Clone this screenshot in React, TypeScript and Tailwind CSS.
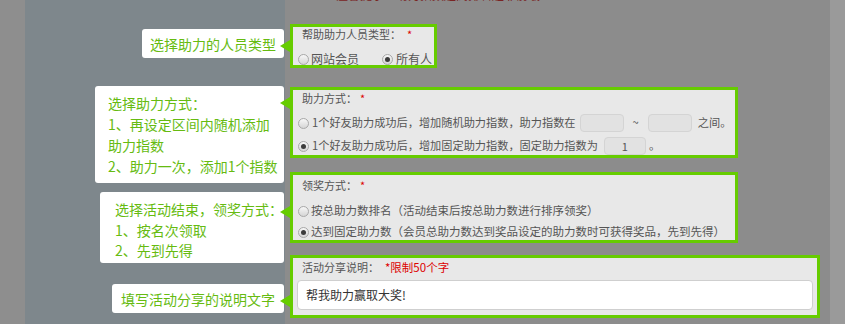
import React from 'react';

const FONT = { fontFamily: '"Noto Sans CJK SC", "Noto Sans", sans-serif' };

const Radio = ({ checked }: { checked?: boolean }) => (
	<span className="w-[11px] h-[11px] rounded-full border border-[#a8a8a8] bg-gradient-to-b from-[#f7f7f7] to-[#d6d6d6] flex items-center justify-center shrink-0">
		{checked && <span className="w-[5px] h-[5px] rounded-full bg-[#3c3c3c]" />}
	</span>
);

const Arrow = ({ top }: { top: string }) => (
	<span
		className={`absolute -left-[13px] w-0 h-0 border-y-[6px] border-y-transparent border-r-[10px] border-r-[#66cc00] ${top}`}
	/>
);

const Star = ({ ml = 'ml-[3px]' }: { ml?: string }) => <span className={`text-[#dd0000] ${ml}`}>*</span>;

const NumBox = ({ value, w }: { value?: string; w: string }) => (
	<span
		className={`inline-flex items-center justify-center h-[18px] rounded-[4px] border border-[#d4d4d4] bg-[#e2e2e2] text-[#555] text-[11px] shrink-0 ${w}`}
	>
		{value}
	</span>
);

const Tip = ({ className, lines }: { className: string; lines: string[] }) => (
	<div className={`bg-white rounded-[3px] text-[#66bb11] text-[14px] ${className}`}>
		{lines.map((l, i) => (
			<div key={i}>{l}</div>
		))}
	</div>
);

export default function App() {
	return (
		<div className="w-[845px] h-[324px] flex overflow-hidden" style={FONT}>
			<div className="w-[25px] bg-[#8e8e8e]" />
			<div className="w-[260px] bg-[#7e878c] flex flex-col items-end pr-[1px]">
				<Tip className="mt-[29px] w-[142px] h-[29px] flex items-center justify-center leading-none" lines={['选择助力的人员类型']} />
				<Tip
					className="mt-[28px] w-[189px] h-[97px] pl-[13px] pt-[7px] leading-[21px]"
					lines={['选择助力方式：', '1、再设定区间内随机添加', '助力指数', '2、助力一次，添加1个指数']}
				/>
				<Tip
					className="mt-[9px] w-[184px] h-[71px] pl-[15px] pt-[7px] leading-[20.5px]"
					lines={['选择活动结束，领奖方式：', '1、按名次领取', '2、先到先得']}
				/>
				<Tip className="mt-[21px] w-[172px] h-[29px] flex items-center justify-center leading-none" lines={['填写活动分享的说明文字']} />
			</div>
			<div className="w-[545px] bg-[#8c8c8c] flex flex-col pl-[5px]">
				<div className="h-[24px] overflow-hidden pl-[46px]">
					<div className="-mt-[12px] text-[12px] leading-[14px] text-[#7a2424]">温馨提示：助力指数越高排名越靠前哦</div>
				</div>

				<div className="relative w-[147px] h-[44px] border-[3px] border-[#66cc00] bg-[#e8e8e8] text-[#555]">
					<Arrow top="top-[13px]" />
					<div className="pl-[9px] h-[14px] leading-[14px] text-[11px]">
						帮助助力人员类型：
						<Star ml="ml-[6px]" />
					</div>
					<div className="mt-[12px] h-[12px] pl-[5px] flex items-center text-[12px] leading-none">
						<Radio />
						<span className="ml-[2px]">网站会员</span>
						<span className="ml-[23px]" />
						<Radio checked />
						<span className="ml-[3px]">所有人</span>
					</div>
				</div>

				<div className="relative mt-[19px] w-[448px] h-[71px] border-[3px] border-[#66cc00] bg-[#e8e8e8] text-[#555]">
					<Arrow top="top-[7px]" />
					<div className="pl-[9px] h-[17px] leading-[17px] text-[11px]">
						助力方式：
						<Star />
					</div>
					<div className="mt-[7px] h-[18px] pl-[5px] flex items-center text-[11.2px] leading-none whitespace-nowrap">
						<Radio />
						<span className="ml-[3px]">1个好友助力成功后，增加随机助力指数，助力指数在</span>
						<span className="ml-[4px]" />
						<NumBox w="w-[44px]" />
						<span className="mx-[9px]">~</span>
						<NumBox w="w-[44px]" />
						<span className="ml-[6px]">之间。</span>
					</div>
					<div className="mt-[5px] h-[18px] pl-[5px] flex items-center text-[11.2px] leading-none whitespace-nowrap">
						<Radio checked />
						<span className="ml-[3px]">1个好友助力成功后，增加固定助力指数，固定助力指数为</span>
						<span className="ml-[6px]" />
						<NumBox w="w-[42px]" value="1" />
						<span className="ml-[3px]">。</span>
					</div>
				</div>

				<div className="relative mt-[14px] w-[448px] h-[71px] border-[3px] border-[#66cc00] bg-[#e8e8e8] text-[#555]">
					<Arrow top="top-[31px]" />
					<div className="pl-[9px] h-[20px] leading-[20px] text-[11px]">
						领奖方式：
						<Star />
					</div>
					<div className="mt-[9px] h-[14px] pl-[5px] flex items-center text-[11.5px] leading-none whitespace-nowrap">
						<Radio />
						<span className="ml-[2px]">按总助力数排名（活动结束后按总助力数进行排序领奖）</span>
					</div>
					<div className="mt-[7px] h-[14px] pl-[5px] flex items-center text-[11.5px] leading-none whitespace-nowrap">
						<Radio checked />
						<span className="ml-[2px]">达到固定助力数（会员总助力数达到奖品设定的助力数时可获得奖品，先到先得）</span>
					</div>
				</div>

				<div className="relative mt-[12px] w-[530px] h-[63px] border-[3px] border-[#66cc00] bg-[#e8e8e8] text-[#555] px-[4px]">
					<Arrow top="top-[37px]" />
					<div className="pl-[5px] h-[18px] leading-[18px] text-[11px]">
						活动分享说明：
						<span className="text-[#dd0000] ml-[6px] text-[11.5px]">*限制50个字</span>
					</div>
					<div className="mt-[4px] h-[30px] rounded-[4px] border border-[#cfcfcf] bg-white flex items-center pl-[8px] text-[12px] text-[#333]">
						帮我助力赢取大奖!
					</div>
				</div>
			</div>
			<div className="flex-1 bg-[#9a9a9a]" />
		</div>
	);
}
